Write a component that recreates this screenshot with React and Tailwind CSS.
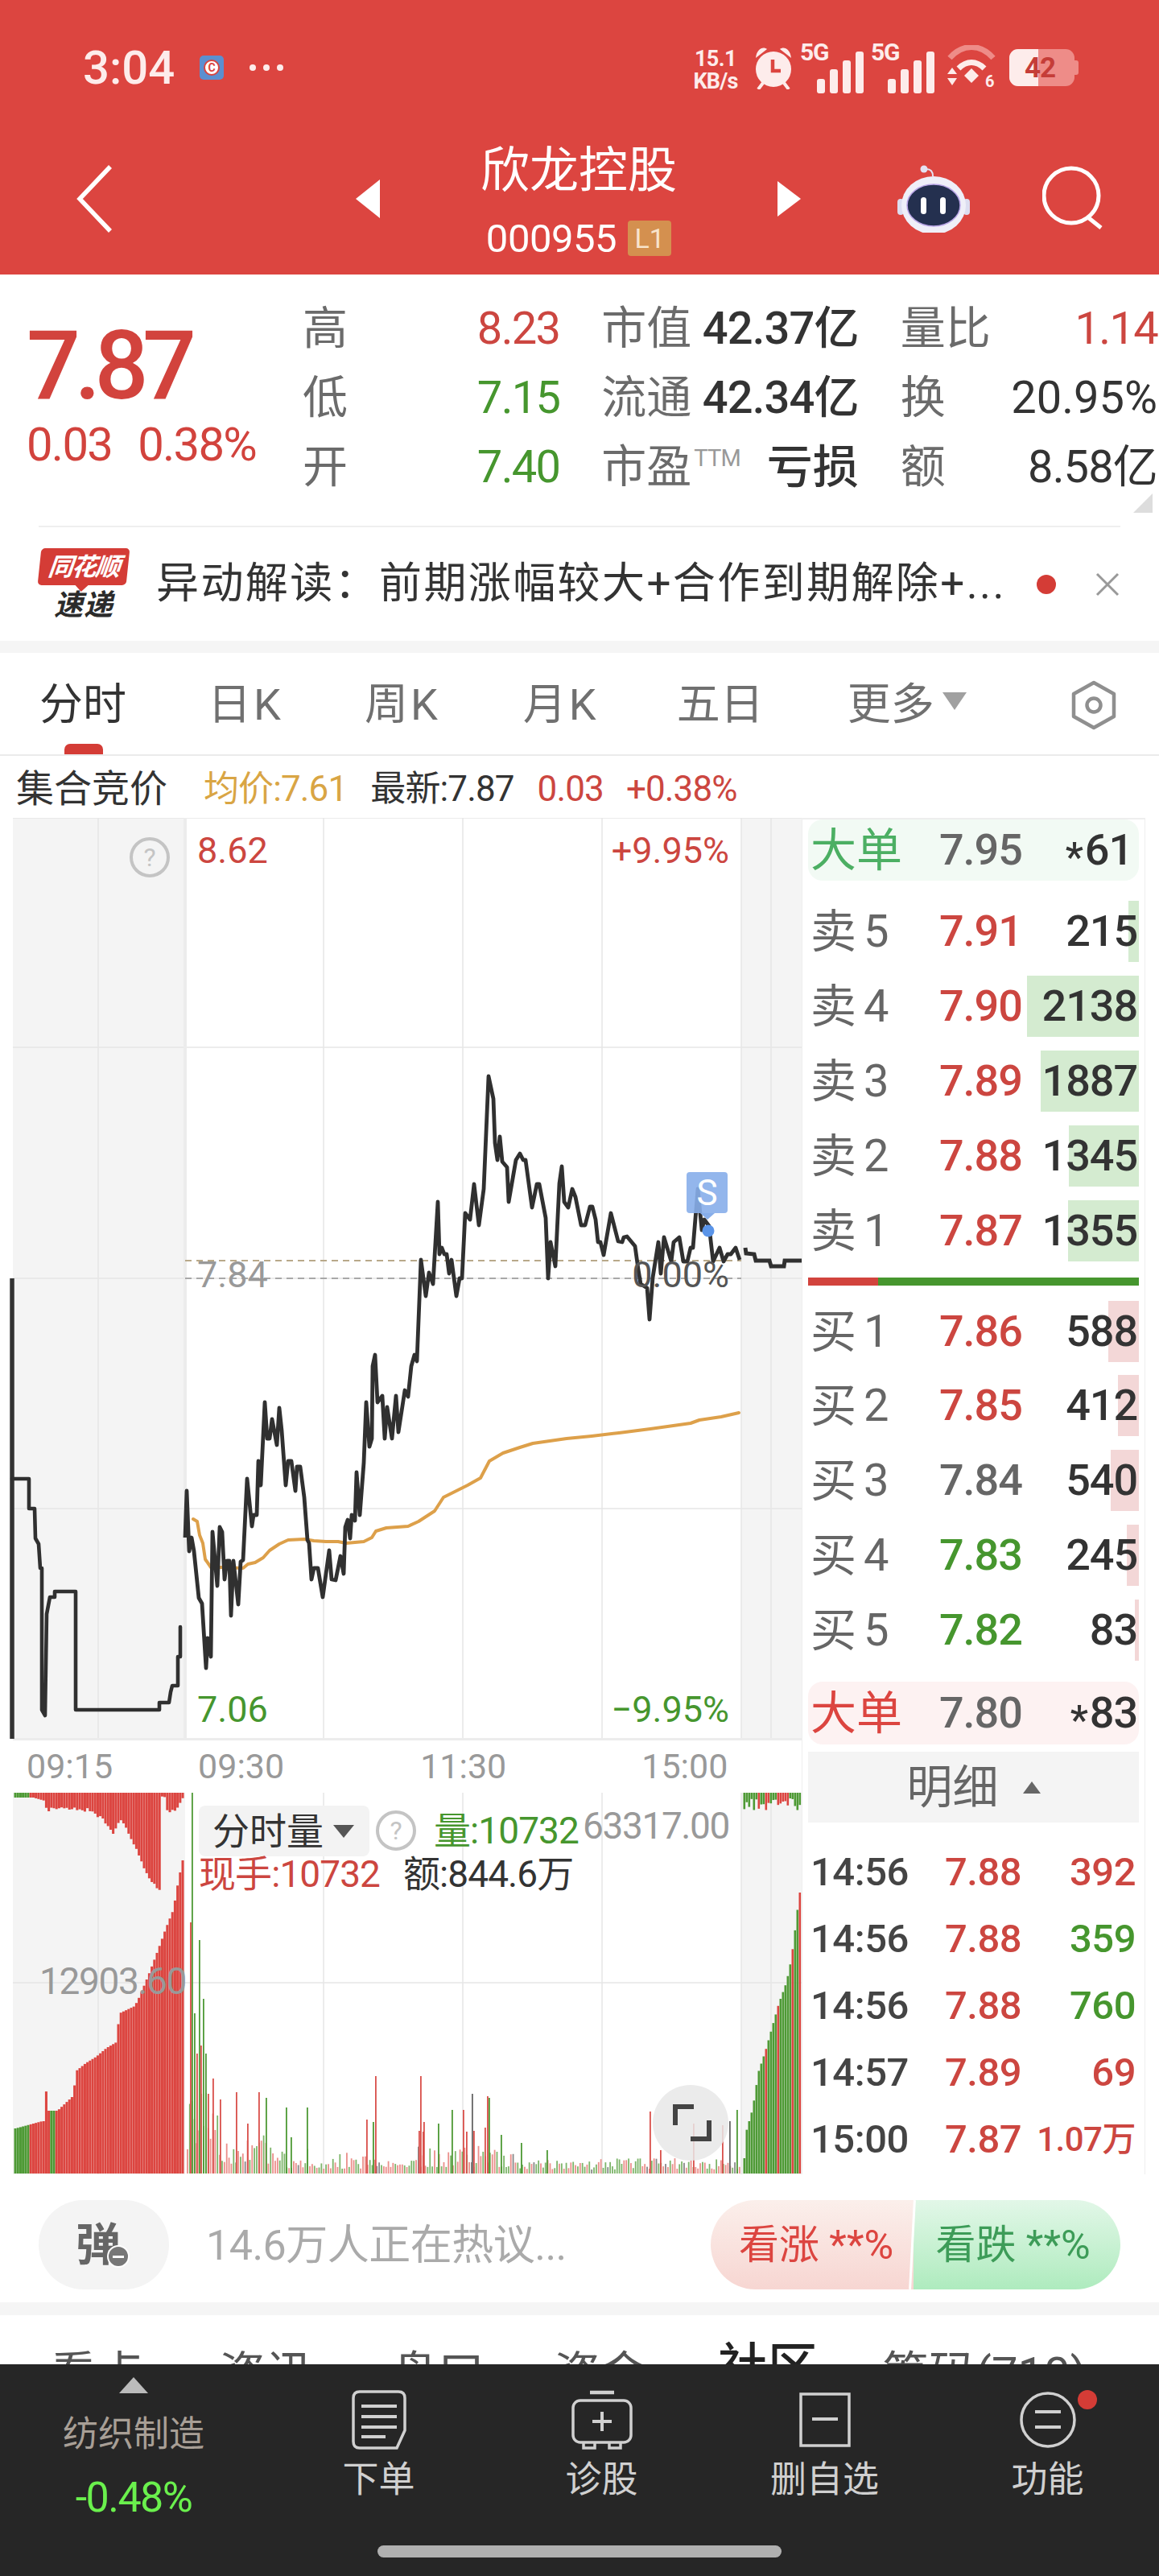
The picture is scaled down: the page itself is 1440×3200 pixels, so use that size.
import React from "react";

const RED = "#DC4540";

const priceLine = [[230,1910],[232,1852],[235,1927],[238,1910],[241,1927],[247,1985],[251,1992],[256,2072],[258,2035],[262,2058],[264,1903],[270,1970],[273,1897],[276,1903],[279,1962],[282,1939],[285,1939],[287,2007],[290,1939],[296,1993],[299,1940],[302,1938],[307,1837],[313,1896],[315,1882],[319,1882],[321,1815],[324,1845],[329,1742],[332,1787],[335,1787],[338,1763],[344,1795],[347,1749],[350,1777],[355,1845],[358,1815],[362,1815],[367,1852],[369,1822],[373,1822],[378,1860],[382,1913],[384,1917],[387,1962],[390,1948],[395,1948],[401,1984],[409,1926],[412,1962],[417,1963],[423,1933],[427,1955],[429,1897],[432,1888],[435,1911],[437,1882],[441,1889],[443,1829],[447,1882],[452,1817],[455,1742],[459,1797],[462,1787],[463,1697],[466,1683],[469,1742],[475,1734],[478,1787],[481,1748],[487,1787],[492,1734],[495,1779],[503,1727],[507,1735],[511,1697],[515,1683],[518,1691],[523,1565],[529,1610],[533,1581],[538,1595],[544,1493],[546,1558],[549,1550],[552,1558],[555,1558],[558,1582],[561,1565],[567,1610],[571,1588],[574,1588],[578,1507],[584,1515],[589,1471],[595,1522],[601,1477],[607,1337],[613,1365],[615,1420],[618,1441],[621,1412],[624,1443],[630,1450],[632,1493],[641,1441],[646,1433],[650,1441],[653,1441],[661,1500],[667,1471],[670,1471],[678,1513],[681,1588],[684,1543],[690,1573],[695,1470],[698,1449],[701,1493],[706,1500],[711,1477],[715,1487],[722,1522],[727,1522],[733,1499],[736,1499],[740,1515],[743,1543],[746,1543],[750,1559],[759,1507],[768,1542],[773,1543],[775,1537],[779,1536],[789,1548],[793,1577],[796,1595],[804,1600],[807,1639],[811,1587],[818,1543],[821,1582],[825,1537],[834,1567],[837,1543],[844,1537],[849,1567],[854,1567],[858,1550],[861,1550],[867,1477],[872,1528],[875,1515],[881,1523],[886,1567],[894,1550],[899,1567],[904,1558],[908,1558],[914,1550],[919,1565]];
const preLine = [[15,1837],[36,1837],[36,1874],[43,1874],[44,1911],[48,1918],[50,1948],[52,1948],[52,2124],[56,2131],[58,2005],[62,1984],[68,1984],[68,1977],[94,1977],[94,2124],[198,2124],[198,2115],[210,2115],[212,2102],[214,2094],[221,2094],[221,2058],[224,2058],[224,2021]];
const postLine = [[926,1550],[927,1557],[937,1558],[939,1566],[956,1566],[958,1573],[974,1573],[975,1566],[997,1566]];
const avgLine = [[240,1887],[245,1890],[248,1907],[252,1917],[255,1937],[262,1947],[273,1947],[302,1948],[308,1943],[317,1941],[327,1935],[335,1926],[347,1918],[358,1913],[378,1912],[390,1914],[405,1915],[420,1915],[430,1917],[452,1915],[462,1910],[467,1902],[480,1898],[507,1896],[520,1890],[540,1877],[551,1860],[581,1845],[597,1836],[608,1815],[625,1805],[646,1798],[662,1793],[704,1787],[735,1784],[769,1780],[808,1775],[858,1768],[869,1764],[896,1760],[918,1755]];
const pts = (a) => a.map((p) => p.join(",")).join(" ");

function rng(seed) {
  let s = seed;
  return () => {
    s = (s * 16807) % 2147483647;
    return s / 2147483647;
  };
}
function interp(profile, x) {
  if (x <= profile[0][0]) return profile[0][1];
  for (let i = 1; i < profile.length; i++) {
    if (x <= profile[i][0]) {
      const [a, b] = profile[i - 1];
      const [c, d] = profile[i];
      return b + ((d - b) * (x - a)) / (c - a);
    }
  }
  return profile[profile.length - 1][1];
}

const leftUp = [[18,2643],[51,2634],[55,2634],[56,2593],[58,2593],[59,2621],[70,2621],[89,2603],[94,2571],[105,2562],[118,2554],[131,2543],[143,2536],[147,2500],[166,2491],[172,2479],[184,2450],[195,2421],[204,2396],[214,2371],[220,2336],[225,2312],[228,2300]];
const leftDown = [[18,2232],[40,2232],[54,2236],[56,2245],[70,2241],[96,2243],[112,2246],[128,2257],[140,2278],[143,2262],[150,2257],[160,2279],[169,2296],[182,2325],[195,2343],[197,2343],[198,2229],[203,2229],[207,2246],[217,2246],[224,2232]];
const rightUp = [[923,2690],[925,2650],[934,2618],[941,2573],[950,2546],[957,2521],[966,2489],[976,2461],[982,2432],[987,2393],[992,2350],[996,2350]];

const spikes = [[236,2387,"r"],[238,2226,"g"],[241,2500,"g"],[244,2550,"r"],[247,2409,"g"],[249,2540,"r"],[252,2482,"g"],[255,2550,"g"],[258,2600,"r"],[264,2581,"r"],[273,2607,"r"],[293,2598,"r"],[307,2637,"r"],[321,2598,"r"],[330,2605,"g"],[355,2617,"g"],[361,2654,"g"],[381,2617,"g"],[455,2632,"r"],[463,2635,"g"],[466,2578,"r"],[520,2646,"r"],[522,2578,"r"],[526,2635,"r"],[525,2647,"r"],[544,2637,"g"],[561,2620,"g"],[575,2620,"r"],[579,2647,"r"],[586,2600,"x"],[605,2603,"r"],[607,2605,"g"],[588,2646,"r"],[602,2642,"r"],[622,2651,"g"],[647,2661,"g"],[679,2670,"g"],[807,2622,"r"],[820,2670,"r"],[915,2620,"g"],[906,2634,"x"],[897,2639,"r"],[861,2637,"r"]];

function VolumeBars() {
  const r = rng(4242);
  const bars = [];
  const bottom = 2699;
  for (let x = 17.5; x < 228; x += 3.2) {
    const color = (x < 36 || (x > 60 && x < 68)) ? "#4E9A35" : RED;
    const up = interp(leftUp, x);
    bars.push(<rect key={"lu" + x} x={x} y={up} width={3.05} height={bottom - up} fill={color} />);
    const dn = interp(leftDown, x);
    const dc = x < 36 ? "#4E9A35" : RED;
    bars.push(<rect key={"ld" + x} x={x} y={2226} width={3.05} height={dn - 2226 + (x > 54 ? r() * 5 : 0)} fill={dc} />);
  }
  for (let i = 0; i < 240; i++) {
    const x = 232 + i * 2.87;
    if (x > 921) break;
    let h;
    const q = r();
    const q2 = r();
    if (x < 270) h = 30 + q * 70;
    else if (x < 340) h = 12 + q * 36;
    else if (x < 480) h = 6 + q * q * 26;
    else if (x < 640) h = 8 + q * q * 28;
    else if (x < 720) h = 5 + q * 12;
    else h = 5 + q * 14;
    const c = q2 < 0.47 ? "#EB8F8B" : q2 < 0.94 ? "#7DB56A" : "#888888";
    bars.push(<rect key={"m" + i} x={x} y={bottom - h} width={1.8} height={h} fill={c} />);
  }
  for (const [x, y, k] of spikes) {
    const c = k === "r" ? "#D9504B" : k === "g" ? "#4E9A35" : "#666666";
    bars.push(<rect key={"s" + x + y} x={x} y={y} width={1.8} height={bottom - y} fill={c} />);
  }
  for (let x = 923.5; x < 995; x += 3) {
    const up = interp(rightUp, x);
    const c = x < 946 ? "#4E9A35" : r() < 0.45 ? RED : "#4E9A35";
    bars.push(<rect key={"ru" + x} x={x} y={up} width={2.6} height={bottom - up} fill={c} />);
    const depth = 6 + r() * 16;
    bars.push(<rect key={"rd" + x} x={x} y={2226} width={2.6} height={depth} fill={r() < 0.6 ? "#4E9A35" : RED} />);
  }
  return <g>{bars}</g>;
}

function PriceChart() {
  return (
    <svg className="absolute left-0 top-0" width="996" height="1146" viewBox="0 1016 996 1146">
      <rect x="16" y="1016" width="214" height="1145" fill="#F4F4F4" />
      <rect x="921" y="1016" width="75" height="1145" fill="#F4F4F4" />
      <g stroke="#E6E6E6" strokeWidth="1.5">
        <line x1="16" x2="996" y1="1301" y2="1301" />
        <line x1="16" x2="996" y1="1588" y2="1588" />
        <line x1="16" x2="996" y1="1874" y2="1874" />
        <line x1="122" x2="122" y1="1016" y2="2161" />
        <line x1="402" x2="402" y1="1016" y2="2161" />
        <line x1="575" x2="575" y1="1016" y2="2161" />
        <line x1="748" x2="748" y1="1016" y2="2161" />
        <line x1="958" x2="958" y1="1016" y2="2161" />
        <line x1="921" x2="921" y1="1016" y2="2161" />
        <line x1="16" x2="996" y1="1016" y2="1016" />
      </g>
      <rect x="228" y="1016" width="4" height="1145" fill="#ECECEC" />
      <rect x="16" y="2159" width="980" height="3" fill="#ECECEC" />
      <line x1="230" x2="921" y1="1566" y2="1566" stroke="#B8A98A" strokeWidth="2" strokeDasharray="8 6" />
      <line x1="230" x2="921" y1="1588" y2="1588" stroke="#A8A8A8" strokeWidth="2" strokeDasharray="8 6" />
      <line x1="15" x2="15" y1="1588" y2="2160" stroke="#333" strokeWidth="5.5" />
      <polyline points={pts(preLine)} fill="none" stroke="#303030" strokeWidth="4.6" strokeLinejoin="round" strokeLinecap="round" />
      <polyline points={pts(avgLine)} fill="none" stroke="#DDA04A" strokeWidth="4" strokeLinejoin="round" strokeLinecap="round" />
      <polyline points={pts(priceLine)} fill="none" stroke="#303030" strokeWidth="4.8" strokeLinejoin="round" />
      <polyline points={pts(postLine)} fill="none" stroke="#303030" strokeWidth="5" />
      <circle cx="880" cy="1529" r="7.5" fill="#5A94E8" />
    </svg>
  );
}

function VolumeChart() {
  return (
    <svg className="absolute left-0 top-0" width="996" height="474" viewBox="0 2226 996 474">
      <rect x="16" y="2226" width="214" height="474" fill="#F4F4F4" />
      <rect x="921" y="2226" width="75" height="474" fill="#F4F4F4" />
      <g stroke="#E6E6E6" strokeWidth="1.5">
        <line x1="16" x2="996" y1="2462" y2="2462" />
        <line x1="122" x2="122" y1="2226" y2="2700" />
        <line x1="402" x2="402" y1="2226" y2="2700" />
        <line x1="575" x2="575" y1="2226" y2="2700" />
        <line x1="748" x2="748" y1="2226" y2="2700" />
        <line x1="958" x2="958" y1="2226" y2="2700" />
        <line x1="921" x2="921" y1="2226" y2="2700" />
      </g>
      <VolumeBars />
    </svg>
  );
}

function StatCell({ label, value, cls }) {
  return (
    <div className="flex items-center justify-between">
      <span className="text-[56px] leading-none text-[#6B6B6B]">{label}</span>
      <span className={"text-[56px] leading-none " + cls}>{value}</span>
    </div>
  );
}

function BookRow({ label, n, price, vol, bar, bg, pcls, mb }) {
  return (
    <div className={"relative flex h-[76px] shrink-0 items-center pl-[3px] " + mb}>
      <div className="absolute bottom-0 right-0 top-0" style={{ width: bar, backgroundColor: bg }} />
      <span className="relative flex w-[160px] items-center text-[#666]">
        <span className="w-[66px] text-[57px] leading-none">{label}</span>
        <span className="text-[56px] leading-none">{n}</span>
      </span>
      <span className={"relative text-[54px] font-medium leading-none tracking-[-0.02em] " + pcls}>{price}</span>
      <span className="relative flex-1 pr-[2px] text-right text-[54px] font-medium leading-none tracking-[-0.02em] text-[#333]">{vol}</span>
    </div>
  );
}

function DetailRow({ t, p, v, vcls, small }) {
  return (
    <div className="flex h-[83px] shrink-0 items-center pl-[3px] pr-[4px] text-[49px] font-medium leading-none tracking-[-0.01em]">
      <span className="w-[167px] text-[#444]">{t}</span>
      <span className="text-[#CC4640]">{p}</span>
      <span className={"flex-1 text-right " + vcls + " " + (small ? "text-[42px]" : "")}>{v}</span>
    </div>
  );
}

function Bars() {
  return (
    <svg width="58" height="52" viewBox="0 0 58 52" fill="#FDECEB">
      <rect x="0" y="34" width="10" height="18" rx="3" />
      <rect x="16" y="22" width="10" height="30" rx="3" />
      <rect x="32" y="11" width="10" height="41" rx="3" />
      <rect x="48" y="0" width="10" height="52" rx="3" />
    </svg>
  );
}

function Header() {
  return (
    <div className="flex h-[341px] flex-col bg-[#DC4540] text-white">
      <div className="flex h-[168px] shrink-0 items-center pl-[103px]">
        <span className="w-[145px] text-[58px] font-medium leading-none text-[#FDECEB]">3:04</span>
        <span className="flex h-[30px] w-[30px] items-center justify-center rounded-[5px] bg-[#5B8FD0]">
          <span className="flex h-[20px] w-[20px] items-center justify-center rounded-full border-2 border-[#D9443F] bg-white text-[14px] font-bold leading-none text-[#D9443F]">C</span>
        </span>
        <span className="ml-[32px] flex gap-[9px]">
          <i className="block h-[8px] w-[8px] rounded-full bg-[#FDECEB]" />
          <i className="block h-[8px] w-[8px] rounded-full bg-[#FDECEB]" />
          <i className="block h-[8px] w-[8px] rounded-full bg-[#FDECEB]" />
        </span>
        <div className="ml-[504px] flex w-[66px] flex-col items-center pt-[4px] text-[#FDECEB]">
          <span className="text-[27px] font-bold leading-[30px] tracking-[-0.02em]">15.1</span>
          <span className="text-[27px] font-bold leading-[26px] tracking-[-0.03em]">KB/s</span>
        </div>
        <svg className="ml-[16px]" width="46" height="54" viewBox="0 0 46 54">
          <path d="M1 15 C2 4 10 0 15 4 Z M45 15 C44 4 36 0 31 4 Z" fill="#FDECEB" />
          <circle cx="23" cy="29" r="22" fill="#FDECEB" />
          <path d="M22 17 V31 H32" fill="none" stroke="#DC4540" strokeWidth="4.5" />
          <path d="M10 46 L4 54 M36 46 L42 54" stroke="#FDECEB" strokeWidth="4" />
        </svg>
        <div className="relative ml-[10px] h-[56px] w-[79px]">
          <span className="absolute left-0 top-[-6px] text-[30px] font-bold leading-none tracking-[-0.04em] text-[#FDECEB]">5G</span>
          <div className="absolute bottom-[-4px] right-0"><Bars /></div>
        </div>
        <div className="relative ml-[9px] h-[56px] w-[79px]">
          <span className="absolute left-0 top-[-6px] text-[30px] font-bold leading-none tracking-[-0.04em] text-[#FDECEB]">5G</span>
          <div className="absolute bottom-[-4px] right-0"><Bars /></div>
        </div>
        <svg className="ml-[15px]" width="62" height="56" viewBox="0 0 62 56" fill="none">
          <path d="M4 16 C20 -2 42 -2 58 16" stroke="#EE8C88" strokeWidth="7" />
          <path d="M15 29 C25 19 37 19 47 29" stroke="#FDECEB" strokeWidth="7" />
          <path d="M22 38 L31 29 L40 38 L31 47 Z" fill="#FDECEB" />
          <path d="M1 36 L7 28 L13 36 Z M1 41 L13 41 L7 50 Z" fill="#FDECEB" />
          <text x="48" y="52" fontSize="20" fontWeight="700" fill="#FDECEB">6</text>
        </svg>
        <div className="relative ml-[16px] flex h-[46px] w-[81px] overflow-hidden rounded-[11px] bg-[#EE8C88]">
          <div className="h-full w-[36px] bg-[#FDECEB]" />
          <span className="absolute left-[19px] top-[6px] text-[35px] font-bold leading-none tracking-[-0.03em] text-[#C53D38]">42</span>
        </div>
        <div className="h-[18px] w-[5px] rounded-r-[3px] bg-[#EE8C88]" />
      </div>
      <div className="flex items-center pb-[10px] pl-[95px]">
        <svg width="45" height="84" viewBox="0 0 45 84" fill="none">
          <path d="M42 2 L4 42 L42 82" stroke="white" strokeWidth="5.5" />
        </svg>
        <svg className="ml-[302px]" width="30" height="48" viewBox="0 0 30 48"><path d="M30 0 V48 L0 24 Z" fill="white" /></svg>
        <div className="flex w-[494px] flex-col items-center gap-[18px]">
          <span className="mt-[4px] h-[76px] text-[61px] leading-[80px] text-white">欣龙控股</span>
          <span className="flex h-[60px] items-center gap-[14px]">
            <span className="text-[49px] leading-none tracking-[-0.01em] text-white">000955</span>
            <span className="flex h-[44px] w-[54px] items-center justify-center rounded-[4px] bg-[#D4904F] text-[34px] leading-none text-[#F8E3CB]">L1</span>
          </span>
        </div>
        <svg width="29" height="44" viewBox="0 0 29 44"><path d="M0 0 V44 L29 22 Z" fill="white" /></svg>
        <svg className="ml-[120px]" width="90" height="84" viewBox="0 0 90 84">
          <circle cx="33" cy="5" r="4.5" fill="#E4E1F2" />
          <path d="M36 5 C42 5 44 9 44 14" stroke="#E4E1F2" strokeWidth="2" fill="none" />
          <rect x="0" y="42" width="8" height="20" rx="4" fill="#DCDDF0" />
          <rect x="82" y="42" width="8" height="20" rx="4" fill="#DCDDF0" />
          <ellipse cx="45" cy="50" rx="40" ry="36" fill="#EFEFF8" />
          <ellipse cx="45" cy="50" rx="33" ry="26" fill="#24304F" stroke="#B9A5E6" strokeWidth="1.5" />
          <rect x="29" y="40" width="7" height="21" rx="3.5" fill="white" />
          <rect x="53" y="40" width="7" height="21" rx="3.5" fill="white" />
        </svg>
        <svg className="ml-[90px]" width="80" height="84" viewBox="0 0 80 84" fill="none">
          <ellipse cx="36" cy="38" rx="34" ry="34" stroke="white" strokeWidth="5" />
          <path d="M58 66 L73 78" stroke="white" strokeWidth="5" />
        </svg>
      </div>
    </div>
  );
}

function Stats() {
  return (
    <div className="relative flex h-[312px] pt-[24px]">
      <div className="w-[376px] shrink-0 pl-[33px]">
        <div className="pt-[31px] text-[118px] font-medium leading-[118px] tracking-[-0.065em] text-[#D2433D]">7.87</div>
        <div className="mt-[9px] flex gap-[32px] text-[58px] leading-none tracking-[-0.03em] text-[#D2433D]">
          <span>0.03</span>
          <span>0.38%</span>
        </div>
      </div>
      <div className="grid h-[258px] w-[1062px] grid-cols-3 grid-rows-3 gap-x-[52px]">
        <StatCell label="高" value="8.23" cls="tracking-[-0.03em] text-[#CC4640]" />
        <StatCell label="市值" value="42.37亿" cls="font-medium tracking-[-0.015em] text-[#333]" />
        <StatCell label="量比" value="1.14" cls="tracking-[-0.03em] text-[#CC4640]" />
        <StatCell label="低" value="7.15" cls="tracking-[-0.03em] text-[#46962E]" />
        <StatCell label="流通" value="42.34亿" cls="font-medium tracking-[-0.015em] text-[#333]" />
        <StatCell label="换" value="20.95%" cls="text-[#333]" />
        <StatCell label="开" value="7.40" cls="tracking-[-0.03em] text-[#46962E]" />
        <div className="flex items-center justify-between">
          <span className="flex items-start">
            <span className="text-[56px] leading-none text-[#6B6B6B]">市盈</span>
            <span className="ml-[3px] text-[29px] leading-[34px] tracking-[-0.03em] text-[#999]">TTM</span>
          </span>
          <span className="text-[57px] font-medium leading-none text-[#333]">亏损</span>
        </div>
        <StatCell label="额" value="8.58亿" cls="tracking-[-0.015em] text-[#333]" />
      </div>
      <svg className="absolute bottom-[16px] right-[8px]" width="24" height="24" viewBox="0 0 24 24"><path d="M24 0 V24 H0 Z" fill="#DDDDDD" /></svg>
    </div>
  );
}

function News() {
  return (
    <div className="mx-[48px] flex h-[143px] items-center border-t-2 border-[#EFEFEF]">
      <div className="flex w-[112px] shrink-0 flex-col items-center">
        <div className="relative flex h-[46px] w-[110px] -skew-x-6 items-center justify-center rounded-[5px] bg-[#D43C36]">
          <span className="text-[31px] font-bold italic leading-none tracking-[-0.05em] text-white">同花顺</span>
          <i className="absolute bottom-[-8px] left-[46px] block h-0 w-0 border-x-[9px] border-t-[9px] border-x-transparent border-t-[#D43C36]" />
        </div>
        <span className="mt-[6px] text-[36px] font-bold italic leading-[38px] tracking-[1px] text-[#2B2B2B]">速递</span>
      </div>
      <span className="ml-[34px] w-[1057px] whitespace-nowrap text-[53px] leading-none tracking-[2.4px] text-[#333]">异动解读：前期涨幅较大+合作到期解除+...</span>
      <i className="ml-[37px] block h-[24px] w-[24px] shrink-0 rounded-full bg-[#D43C36]" />
      <svg className="ml-[48px]" width="32" height="32" viewBox="0 0 32 32" fill="none"><path d="M3 3 L29 29 M29 3 L3 29" stroke="#999" strokeWidth="3" /></svg>
    </div>
  );
}

function Tabs() {
  return (
    <div className="flex h-[128px] items-center border-b-2 border-[#EBEBEB] pt-[4px] text-[54px] leading-none text-[#707070]">
      <div className="relative ml-[49px] text-[#333]">
        分时
        <i className="absolute bottom-[-34px] left-[31px] block h-[13px] w-[48px] rounded-t-[7px] bg-[#D43C36]" />
      </div>
      <span className="ml-[101px] tracking-[3px]">日K</span>
      <span className="ml-[101px] tracking-[3px]">周K</span>
      <span className="ml-[103px] tracking-[3px]">月K</span>
      <span className="ml-[97px]">五日</span>
      <span className="ml-[104px]">更多</span>
      <svg className="ml-[10px] mt-[-10px]" width="30" height="22" viewBox="0 0 30 22"><path d="M0 0 H30 L15 22 Z" fill="#A0A0A0" /></svg>
      <svg className="ml-[127px]" width="62" height="62" viewBox="0 0 62 62" fill="none">
        <path d="M31 3 L56 17 V45 L31 59 L6 45 V17 Z" stroke="#8F8F8F" strokeWidth="4.5" strokeLinejoin="round" />
        <circle cx="31" cy="31" r="8.5" stroke="#8F8F8F" strokeWidth="4.5" />
      </svg>
    </div>
  );
}

function InfoRow() {
  return (
    <div className="flex h-[77px] items-center pl-[20px] pt-[4px] text-[44px] leading-none tracking-[-0.02em]">
      <span className="text-[47px] tracking-normal text-[#333]">集合竞价</span>
      <span className="ml-[45px] text-[#D9A544]">均价:7.61</span>
      <span className="ml-[29px] text-[#333]">最新:7.87</span>
      <span className="ml-[29px] text-[#CC4640]">0.03</span>
      <span className="ml-[28px] text-[#CC4640]">+0.38%</span>
    </div>
  );
}

function QMark({ cls }) {
  return (
    <span className={"absolute flex h-[50px] w-[50px] items-center justify-center rounded-full border-[4px] border-[#C4C4C4] text-[32px] leading-none text-[#C4C4C4] " + cls}>?</span>
  );
}

function LeftCharts() {
  return (
    <div className="w-[996px] shrink-0">
      <div className="relative h-[1146px] text-[45px] leading-none">
        <PriceChart />
        <QMark cls="left-[161px] top-[24px]" />
        <span className="absolute left-[245px] top-[18px] text-[#CC4640]">8.62</span>
        <span className="absolute right-[90px] top-[18px] text-[#CC4640]">+9.95%</span>
        <span className="absolute left-[245px] top-[545px] text-[#999]">7.84</span>
        <span className="absolute right-[90px] top-[545px] text-[#555]">0.00%</span>
        <span className="absolute left-[245px] top-[1085px] text-[#46962E]">7.06</span>
        <span className="absolute right-[90px] top-[1085px] text-[#46962E]">−9.95%</span>
        <div className="absolute left-[853px] top-[440px] flex h-[51px] w-[51px] items-center justify-center rounded-[4px] bg-[#87AEEA]/90 text-[44px] text-white">S</div>
        <i className="absolute left-[870px] top-[491px] block h-0 w-0 border-x-[9px] border-t-[8px] border-x-transparent border-t-[#87AEEA]" />
      </div>
      <div className="flex h-[65px] items-center text-[43px] leading-none text-[#999]">
        <span className="ml-[33px]">09:15</span>
        <span className="ml-[106px]">09:30</span>
        <span className="ml-[169px]">11:30</span>
        <span className="ml-[168px]">15:00</span>
      </div>
      <div className="relative h-[474px] overflow-hidden text-[46px] leading-none">
        <VolumeChart />
        <div className="absolute left-[247px] top-[16px] flex h-[63px] w-[212px] items-center rounded-[8px] bg-[#F3F3F3] pl-[17px]">
          <span className="text-[46px] text-[#333]">分时量</span>
          <svg className="ml-[12px]" width="26" height="16" viewBox="0 0 26 16"><path d="M0 0 H26 L13 16 Z" fill="#555" /></svg>
        </div>
        <QMark cls="left-[467px] top-[22px]" />
        <span className="absolute left-[539px] top-[24px] tracking-[-0.02em] text-[#46962E]">量:10732</span>
        <span className="absolute left-[724px] top-[18px] tracking-[-0.03em] text-[#999]">63317.00</span>
        <span className="absolute left-[247px] top-[78px] tracking-[-0.02em] text-[#CC4640]">现手:10732</span>
        <span className="absolute left-[501px] top-[78px] tracking-[-0.02em] text-[#333]">额:844.6万</span>
        <span className="absolute left-[49px] top-[211px] tracking-[-0.03em] text-[#999]">12903.60</span>
        <div className="absolute left-[811px] top-[363px] h-[94px] w-[94px] rounded-full bg-[#E8E8E8]/85">
          <svg width="94" height="94" viewBox="0 0 94 94" fill="none">
            <path d="M28 50 V27 H51" stroke="#444" strokeWidth="6" />
            <path d="M70 44 V67 H47" stroke="#444" strokeWidth="6" />
          </svg>
        </div>
      </div>
    </div>
  );
}

function Star() {
  return <span className="mr-[3px] inline-block translate-y-[8px] text-[50px] leading-none">*</span>;
}

function RightPanel() {
  return (
    <div className="flex h-[1685px] w-[427px] shrink-0 flex-col border-x border-t-2 border-[#EEEEEE] px-[7px]">
      <div className="flex h-[76px] shrink-0 items-center rounded-[18px] bg-[#F2FAF4] pl-[3px]">
        <span className="w-[160px] text-[57px] leading-none text-[#4CAF63]">大单</span>
        <span className="text-[54px] font-medium leading-none tracking-[-0.02em] text-[#666]">7.95</span>
        <span className="flex-1 pr-[8px] text-right text-[54px] font-medium leading-none tracking-[-0.02em] text-[#333]"><Star />61</span>
      </div>
      <div className="h-[25px] shrink-0" />
      <BookRow label="卖" n="5" price="7.91" vol="215" bar="13px" bg="#D4EBD0" pcls="text-[#CC4640]" mb="mb-[17px]" />
      <BookRow label="卖" n="4" price="7.90" vol="2138" bar="139px" bg="#D4EBD0" pcls="text-[#CC4640]" mb="mb-[17px]" />
      <BookRow label="卖" n="3" price="7.89" vol="1887" bar="122px" bg="#D4EBD0" pcls="text-[#CC4640]" mb="mb-[17px]" />
      <BookRow label="卖" n="2" price="7.88" vol="1345" bar="87px" bg="#D4EBD0" pcls="text-[#CC4640]" mb="mb-[17px]" />
      <BookRow label="卖" n="1" price="7.87" vol="1355" bar="88px" bg="#D4EBD0" pcls="text-[#CC4640]" mb="mb-[20px]" />
      <div className="flex h-[10px] shrink-0">
        <div className="w-[87px] bg-[#D2433D]" />
        <div className="flex-1 bg-[#46962E]" />
      </div>
      <div className="h-[19px] shrink-0" />
      <BookRow label="买" n="1" price="7.86" vol="588" bar="38px" bg="#F3D7D7" pcls="text-[#CC4640]" mb="mb-[16px]" />
      <BookRow label="买" n="2" price="7.85" vol="412" bar="26px" bg="#F3D7D7" pcls="text-[#CC4640]" mb="mb-[17px]" />
      <BookRow label="买" n="3" price="7.84" vol="540" bar="35px" bg="#F3D7D7" pcls="text-[#666]" mb="mb-[17px]" />
      <BookRow label="买" n="4" price="7.83" vol="245" bar="15px" bg="#F3D7D7" pcls="text-[#46962E]" mb="mb-[17px]" />
      <BookRow label="买" n="5" price="7.82" vol="83" bar="5px" bg="#F3D7D7" pcls="text-[#46962E]" mb="mb-[26px]" />
      <div className="flex h-[78px] shrink-0 items-center rounded-[18px] bg-[#FDF2F2] pl-[3px]">
        <span className="w-[160px] text-[57px] leading-none text-[#DC4540]">大单</span>
        <span className="text-[54px] font-medium leading-none tracking-[-0.02em] text-[#666]">7.80</span>
        <span className="flex-1 pr-[2px] text-right text-[54px] font-medium leading-none tracking-[-0.02em] text-[#333]"><Star />83</span>
      </div>
      <div className="mt-[9px] flex h-[88px] shrink-0 items-center justify-center bg-[#F4F4F4] text-[57px] leading-none text-[#666]">
        <span>明细</span>
        <svg className="ml-[30px]" width="22" height="15" viewBox="0 0 22 15"><path d="M0 15 L11 0 L22 15 Z" fill="#666" /></svg>
      </div>
      <div className="h-[20px] shrink-0" />
      <DetailRow t="14:56" p="7.88" v="392" vcls="text-[#CC4640]" />
      <DetailRow t="14:56" p="7.88" v="359" vcls="text-[#46962E]" />
      <DetailRow t="14:56" p="7.88" v="760" vcls="text-[#46962E]" />
      <DetailRow t="14:57" p="7.89" v="69" vcls="text-[#CC4640]" />
      <DetailRow t="15:00" p="7.87" v="1.07万" vcls="text-[#CC4640]" small />
    </div>
  );
}

function ActionBar() {
  return (
    <div className="flex h-[159px] items-start pt-[32px]">
      <div className="relative ml-[48px] flex h-[111px] w-[162px] items-center justify-center rounded-full bg-[#F4F4F4]">
        <span className="mr-[14px] text-[56px] font-bold leading-none text-[#666]">弹</span>
        <span className="absolute left-[85px] top-[56px] flex h-[28px] w-[28px] items-center justify-center rounded-full border-2 border-white bg-[#777]">
          <i className="block h-[3px] w-[14px] bg-white" />
        </span>
      </div>
      <span className="ml-[46px] mt-[31px] w-[627px] text-[52px] leading-none tracking-[-0.01em] text-[#AAAAAA]">14.6万人正在热议...</span>
      <div className="relative flex">
        <div className="flex h-[111px] w-[252px] items-center justify-center rounded-l-full bg-gradient-to-b from-[#FBEFEB] to-[#F7D6D2] text-[50px] leading-none text-[#DC4540]">
          <span className="ml-[10px]">看涨 **%</span>
        </div>
        <div className="flex h-[111px] w-[257px] items-center justify-center rounded-r-full bg-gradient-to-b from-[#E2F7E8] to-[#AEEBBE] text-[50px] leading-none text-[#3D9C58]">
          <span className="mr-[10px]">看跌 **%</span>
        </div>
        <i className="absolute left-[249px] top-0 block h-[111px] w-[3px] rotate-[3deg] bg-white" />
      </div>
    </div>
  );
}

function BottomNav() {
  const label = "mt-[12px] text-[45px] leading-[52px] text-[#D0D0D0]";
  return (
    <div className="flex h-[263px] flex-col bg-[#262626]">
      <div className="flex h-[225px] shrink-0">
        <div className="flex w-[332px] shrink-0 flex-col items-center pt-[16px]">
          <svg width="36" height="20" viewBox="0 0 36 20"><path d="M18 0 L36 20 H0 Z" fill="#BBBBBB" /></svg>
          <span className="mt-[29px] text-[44px] leading-none text-[#A89F96]">纺织制造</span>
          <span className="mt-[31px] text-[52px] leading-none tracking-[-0.03em] text-[#6AF04D]">-0.48%</span>
        </div>
        <div className="flex w-[277px] flex-col items-center pt-[32px]">
          <svg width="68" height="74" viewBox="0 0 68 74" fill="none" stroke="#D0D0D0" strokeWidth="3.5">
            <path d="M10 2 H58 Q66 2 66 10 V50 L56 72 H10 Q2 72 2 64 V10 Q2 2 10 2 Z" />
            <path d="M12 20 H56 M12 33 H56 M12 46 H56 M12 58 H42" strokeWidth="4" />
          </svg>
          <span className={label}>下单</span>
        </div>
        <div className="flex w-[277px] flex-col items-center pt-[32px]">
          <svg width="78" height="74" viewBox="0 0 78 74" fill="none" stroke="#D0D0D0" strokeWidth="3.5">
            <path d="M24 3 H54" strokeWidth="4.5" />
            <rect x="3" y="13" width="72" height="52" rx="9" />
            <path d="M16 66 V72 H30 V66 M48 66 V72 H62 V66" />
            <path d="M39 27 V51 M27 39 H51" strokeWidth="4" />
          </svg>
          <span className={label}>诊股</span>
        </div>
        <div className="flex w-[277px] flex-col items-center pt-[35px]">
          <svg width="64" height="71" viewBox="0 0 64 71" fill="none" stroke="#D0D0D0" strokeWidth="3.5">
            <rect x="2" y="2" width="60" height="64" />
            <path d="M16 33 H48" strokeWidth="4" />
          </svg>
          <span className={label}>删自选</span>
        </div>
        <div className="relative flex w-[277px] flex-col items-center pt-[32px]">
          <svg width="70" height="74" viewBox="0 0 70 74" fill="none" stroke="#D0D0D0" strokeWidth="3.5">
            <circle cx="35" cy="37" r="33" />
            <path d="M19 27 H51 M19 46 H51" strokeWidth="4" />
          </svg>
          <span className={label}>功能</span>
          <i className="absolute left-[176px] top-[32px] block h-[24px] w-[24px] rounded-full bg-[#D43C36]" />
        </div>
      </div>
      <div className="mx-auto h-[15px] w-[502px] rounded-full bg-[#B0B0B0]" />
    </div>
  );
}

export default function App() {
  return (
    <div className="h-[3200px] w-[1440px] overflow-hidden bg-white font-[Roboto,'Noto_Sans_CJK_SC',sans-serif]">
      <Header />
      <Stats />
      <News />
      <div className="h-[15px] bg-[#F5F5F5]" />
      <Tabs />
      <InfoRow />
      <div className="flex h-[1685px]">
        <LeftCharts />
        <RightPanel />
      </div>
      <ActionBar />
      <div className="h-[16px] bg-[#F5F5F5]" />
      <div className="flex h-[61px] overflow-hidden pl-[62px] pt-[44px] text-[58px] leading-none text-[#555]">
        <span>看点</span>
        <span className="ml-[94px]">资讯</span>
        <span className="ml-[98px]">盘口</span>
        <span className="ml-[86px]">资金</span>
        <span className="ml-[88px] mt-[-10px] text-[62px] font-medium text-[#222]">社区</span>
        <span className="ml-[80px]">筹码(710)</span>
      </div>
      <BottomNav />
    </div>
  );
}
